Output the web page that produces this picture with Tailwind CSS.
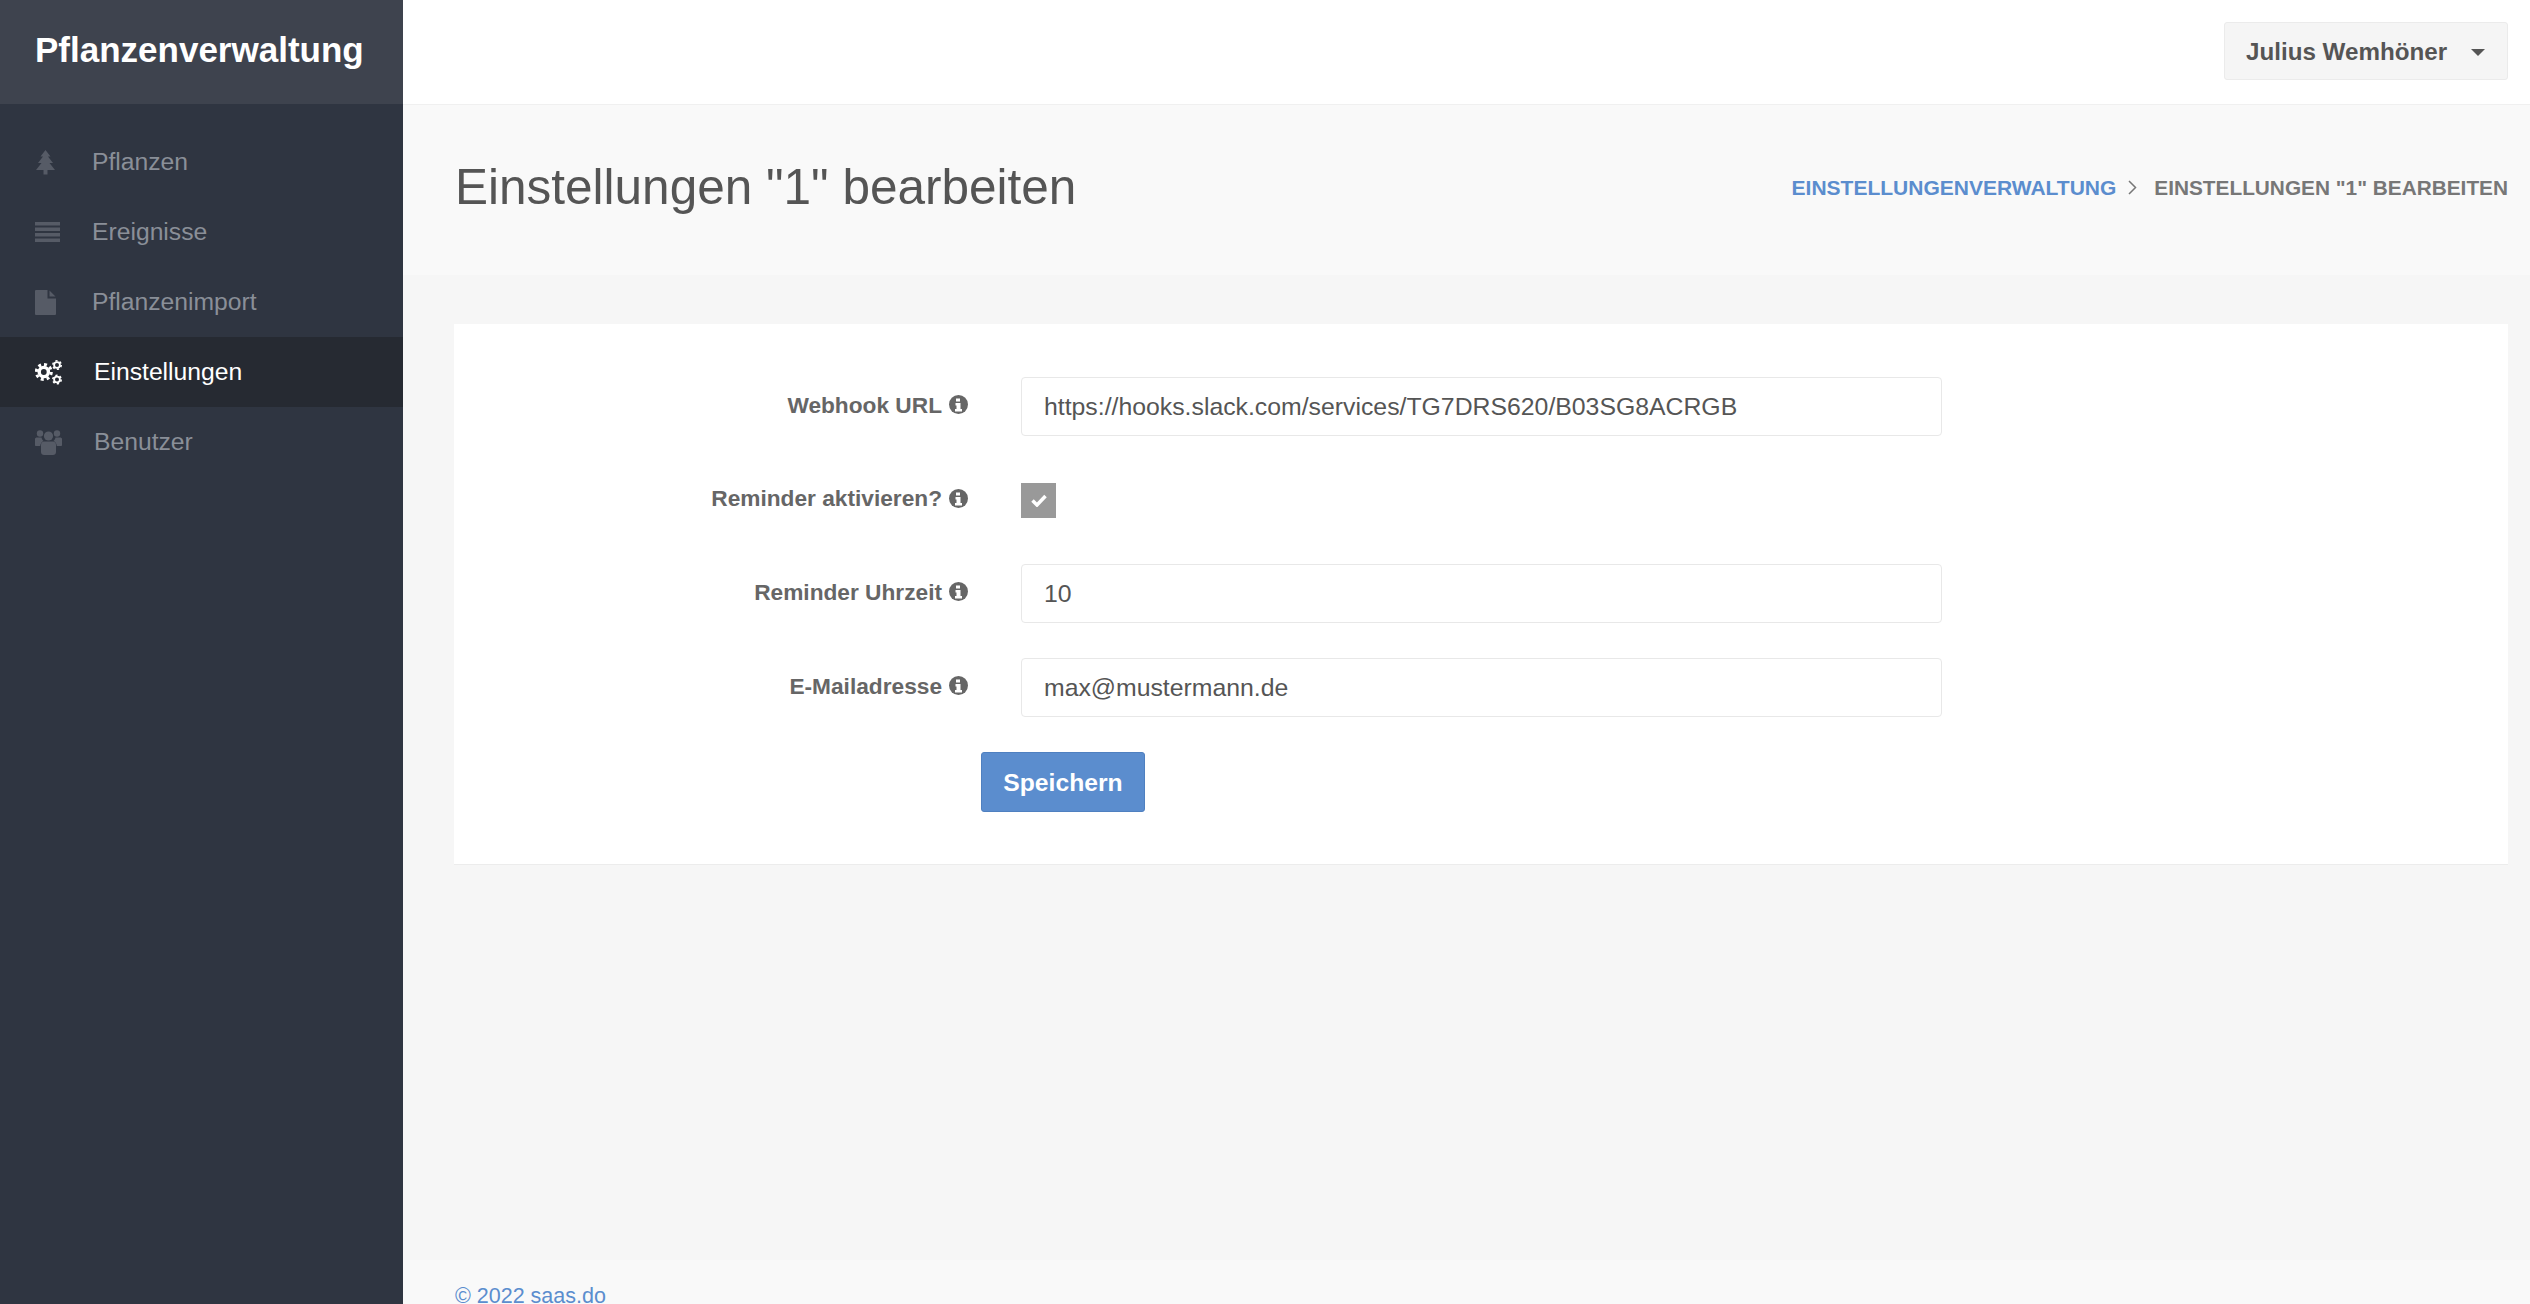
<!DOCTYPE html>
<html lang="de">
<head>
  <meta charset="UTF-8">
  <title>Pflanzenverwaltung</title>
  <script src="https://cdn.jsdelivr.net/npm/@tailwindcss/browser@4"></script>
</head>
<body class="h-screen overflow-hidden bg-[#f6f6f6] font-['Liberation_Sans',Arial,sans-serif] text-[#555]">
  <div class="flex h-[1304px]">

    <!-- Sidebar -->
    <aside class="w-[403px] shrink-0 bg-[#2f3541]">
      <div class="h-[104px] bg-[#3e434e] pl-[35px] flex items-center">
        <span class="text-[35px] font-bold text-white pb-[4px]">Pflanzenverwaltung</span>
      </div>
      <nav class="pt-[23px] text-[24.7px] text-[#8a8f98]">
        <a class="flex items-center h-[70px]">
          <span class="w-[92px] pl-[36px] shrink-0">
            <svg class="w-[19px] h-[25px] text-[#565b66]" viewBox="0 0 19 25" fill="currentColor"><path d="M9.500 0 14.500 6.500H12L17 13H13.500L19 20H11.500V24.500H7.500V20H0L5.500 13H2L7 6.500H4.500z"/></svg>
          </span>
          Pflanzen
        </a>
        <a class="flex items-center h-[70px]">
          <span class="w-[92px] pl-[35px] shrink-0">
            <svg class="w-[25px] h-[20px] text-[#565b66]" viewBox="0 0 25 20" fill="currentColor"><path d="M0 0h25v3.500H0zM0 5.500h25V9H0zM0 11h25v3.500H0zM0 16.500h25V20H0z"/></svg>
          </span>
          Ereignisse
        </a>
        <a class="flex items-center h-[70px]">
          <span class="w-[92px] pl-[35px] shrink-0">
            <svg class="w-[21px] h-[25px] text-[#565b66]" viewBox="0 0 21 25" fill="currentColor"><path d="M1 0h11.500v8.500H21V24a1 1 0 0 1-1 1H1a1 1 0 0 1-1-1V1a1 1 0 0 1 1-1zM14.500 0.500 20.500 6.500h-6z"/></svg>
          </span>
          Pflanzenimport
        </a>
        <a class="flex items-center h-[70px] bg-[#262a32] text-white">
          <span class="w-[94px] pl-[35px] shrink-0">
            <svg class="w-[27px] h-[25px] text-white" viewBox="0 0 27 25" fill="none" stroke="currentColor">
              <circle cx="8.800" cy="12" r="4.600" stroke-width="3.400"/>
              <circle cx="8.800" cy="12" r="7.500" stroke-width="3" stroke-dasharray="2.950 2.940"/>
              <circle cx="22" cy="5" r="2.900" stroke-width="1.800"/>
              <circle cx="22" cy="5" r="4.200" stroke-width="1.600" stroke-dasharray="2.200 2.200"/>
              <circle cx="22" cy="19.500" r="2.900" stroke-width="1.800"/>
              <circle cx="22" cy="19.500" r="4.200" stroke-width="1.600" stroke-dasharray="2.200 2.200"/>
            </svg>
          </span>
          Einstellungen
        </a>
        <a class="flex items-center h-[70px]">
          <span class="w-[94px] pl-[35px] shrink-0">
            <svg class="w-[27px] h-[25px] text-[#565b66]" viewBox="0 0 27 25" fill="currentColor"><circle cx="5" cy="3.500" r="3.200"/><circle cx="22" cy="3.500" r="3.200"/><circle cx="13.500" cy="6" r="4.600"/><path d="M0 9c0-1 1-1.500 2-1.500h4.500c.3 1.500 1 2.700 2 3.500-2 1-3 2.500-3.300 5H1c-.6 0-1-.4-1-1zM27 9c0-1-1-1.500-2-1.500h-4.500c-.3 1.500-1 2.700-2 3.500 2 1 3 2.500 3.300 5H26c.6 0 1-.4 1-1z"/><path d="M9 11.500h9c1.800 0 3 1.300 3 3.500v7c0 1.800-1.300 3-3 3H9c-1.700 0-3-1.200-3-3v-7c0-2.200 1.200-3.500 3-3.500z"/></svg>
          </span>
          Benutzer
        </a>
      </nav>
    </aside>

    <!-- Main -->
    <div class="flex-1 flex flex-col min-w-0">
      <header class="h-[105px] shrink-0 bg-white border-b border-[#f0f0f0] flex items-start justify-end pt-[22px] pr-[22px]">
        <button class="w-[284px] h-[58px] bg-[#f5f5f5] border border-[#ebebeb] rounded-[3px] flex items-center pl-[21px] pt-[2px] text-[24.2px] font-bold text-[#555]">
          Julius Wemhöner
          <span class="ml-[24px] w-0 h-0 border-x-[7px] border-x-transparent border-t-[7px] border-t-[#555]"></span>
        </button>
      </header>

      <section class="h-[170px] shrink-0 bg-[#f9f9f9] flex items-center justify-between pl-[52px] pr-[22px] pb-[5px]">
        <h1 class="text-[49.500px] font-normal text-[#555]">Einstellungen "1" bearbeiten</h1>
        <div class="flex items-center text-[21px] font-bold uppercase">
          <a class="text-[#5b8dce]">Einstellungenverwaltung</a>
          <svg class="w-[9px] h-[15px] mx-[12px] text-[#777]" viewBox="0 0 9 15" fill="none" stroke="currentColor" stroke-width="1.500"><path d="M1 1l6.500 6.500L1 14"/></svg>
          <span class="ml-[5px] text-[20.800px] text-[#777]">Einstellungen "1" bearbeiten</span>
        </div>
      </section>

      <main class="flex-1 pt-[49px] pl-[51px] pr-[22px]">
        <form class="bg-white border-b border-[#ececec] pt-[53px] pb-[52px]">
          <div class="flex flex-col gap-[35px] text-[22.700px]">
            <div class="flex items-center h-[59px] gap-[53px]">
              <label class="w-[514px] shrink-0 flex justify-end items-center gap-[7px] font-bold text-[#666] pb-[3px]">Webhook URL
                <svg class="w-[19px] h-[19px] text-[#666]" viewBox="0 0 19 19"><circle cx="9.500" cy="9.500" r="9.500" fill="currentColor"/><path d="M7 3.500h4v3H7zM6.500 8h5v6h1.500v2.500H6V14h1.500v-3.500h-1z" fill="#fff"/></svg>
              </label>
              <input class="w-[921px] h-[59px] border border-[#e8e8e8] rounded-[4px] px-[22px] text-[24.800px] text-[#555] bg-white" value="https://hooks.slack.com/services/TG7DRS620/B03SG8ACRGB">
            </div>
            <div class="flex items-center h-[58px] gap-[53px]">
              <label class="w-[514px] shrink-0 flex justify-end items-center gap-[7px] font-bold text-[#666] pb-[3px]">Reminder aktivieren?
                <svg class="w-[19px] h-[19px] text-[#666]" viewBox="0 0 19 19"><circle cx="9.500" cy="9.500" r="9.500" fill="currentColor"/><path d="M7 3.500h4v3H7zM6.500 8h5v6h1.500v2.500H6V14h1.500v-3.500h-1z" fill="#fff"/></svg>
              </label>
              <span class="w-[35px] h-[35px] bg-[#999] flex items-center justify-center">
                <svg class="w-[16px] h-[13px]" viewBox="0 0 16 13" fill="none" stroke="#fff" stroke-width="3.500"><path d="M1.500 6.500l4.500 4.500 8.500-9"/></svg>
              </span>
            </div>
            <div class="flex items-center h-[59px] gap-[53px]">
              <label class="w-[514px] shrink-0 flex justify-end items-center gap-[7px] font-bold text-[#666] pb-[3px]">Reminder Uhrzeit
                <svg class="w-[19px] h-[19px] text-[#666]" viewBox="0 0 19 19"><circle cx="9.500" cy="9.500" r="9.500" fill="currentColor"/><path d="M7 3.500h4v3H7zM6.500 8h5v6h1.500v2.500H6V14h1.500v-3.500h-1z" fill="#fff"/></svg>
              </label>
              <input class="w-[921px] h-[59px] border border-[#e8e8e8] rounded-[4px] px-[22px] text-[24.800px] text-[#555] bg-white" value="10">
            </div>
            <div class="flex items-center h-[59px] gap-[53px]">
              <label class="w-[514px] shrink-0 flex justify-end items-center gap-[7px] font-bold text-[#666] pb-[3px]">E-Mailadresse
                <svg class="w-[19px] h-[19px] text-[#666]" viewBox="0 0 19 19"><circle cx="9.500" cy="9.500" r="9.500" fill="currentColor"/><path d="M7 3.500h4v3H7zM6.500 8h5v6h1.500v2.500H6V14h1.500v-3.500h-1z" fill="#fff"/></svg>
              </label>
              <input class="w-[921px] h-[59px] border border-[#e8e8e8] rounded-[4px] px-[22px] text-[24.800px] text-[#555] bg-white" value="max@mustermann.de">
            </div>
            <div class="pl-[527px]">
              <button type="button" class="w-[164px] h-[60px] pt-[2px] bg-[#5b8dce] border border-[#4f80c0] rounded-[3px] text-[24.700px] font-bold text-white">Speichern</button>
            </div>
          </div>
        </form>
      </main>

      <footer class="h-[44px] shrink-0 bg-[#f9f9f9] pl-[52px] pt-[21px] text-[21.500px] leading-[30px] text-[#5b8dce]">© 2022 saas.do</footer>
    </div>
  </div>
</body>
</html>
